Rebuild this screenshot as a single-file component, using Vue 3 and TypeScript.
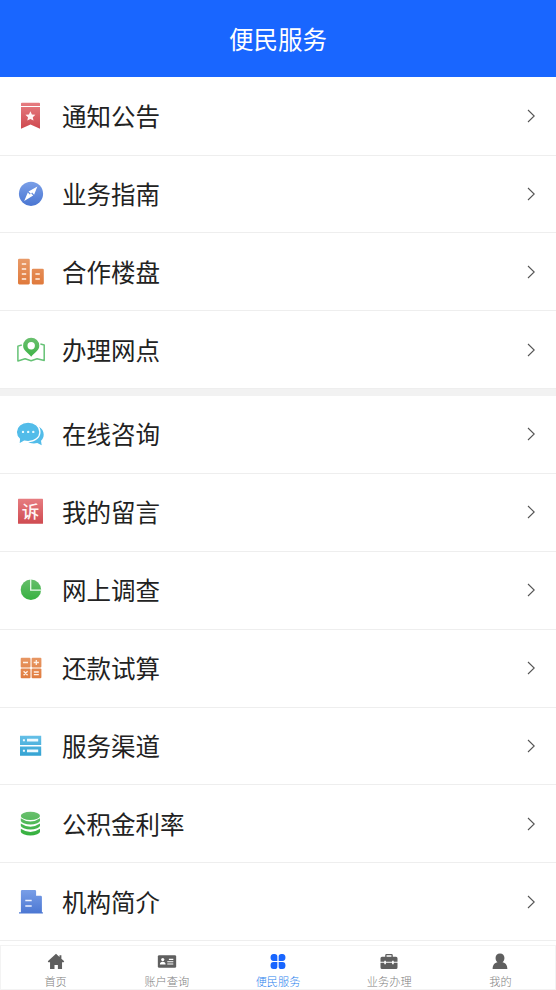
<script setup lang="ts">
interface Service {
  icon: string
  label: string
}

const groups: Service[][] = [
  [
    { icon: 'notice', label: '通知公告' },
    { icon: 'guide', label: '业务指南' },
    { icon: 'estate', label: '合作楼盘' },
    { icon: 'map', label: '办理网点' },
  ],
  [
    { icon: 'chat', label: '在线咨询' },
    { icon: 'message', label: '我的留言' },
    { icon: 'survey', label: '网上调查' },
    { icon: 'calc', label: '还款试算' },
    { icon: 'channel', label: '服务渠道' },
    { icon: 'rate', label: '公积金利率' },
    { icon: 'org', label: '机构简介' },
  ],
]

const tabs: Service[] = [
  { icon: 'home', label: '首页' },
  { icon: 'account', label: '账户查询' },
  { icon: 'service', label: '便民服务' },
  { icon: 'business', label: '业务办理' },
  { icon: 'mine', label: '我的' },
]

const activeTab = 'service'

const gradients = [
  { id: 'red', from: '#e67c80', to: '#cf4a50' },
  { id: 'blue', from: '#7ba0e8', to: '#4a76d2' },
  { id: 'orange', from: '#e89a68', to: '#e07a3c' },
  { id: 'green', from: '#6cc070', to: '#32b03c' },
  { id: 'sky', from: '#6cc4ea', to: '#2e9fd0' },
]
</script>

<template>
  <div class="page">
    <svg class="defs" width="0" height="0">
      <defs>
        <linearGradient v-for="g in gradients" :id="g.id" :key="g.id" x1="0" y1="2" x2="0" y2="27" gradientUnits="userSpaceOnUse">
          <stop offset="0" :stop-color="g.from" />
          <stop offset="1" :stop-color="g.to" />
        </linearGradient>
      </defs>
    </svg>

    <header class="header">便民服务</header>

    <main class="groups">
      <ul v-for="(group, i) in groups" :key="i" class="group">
        <li v-for="item in group" :key="item.label" class="row">
          <svg class="icon" viewBox="0 0 30 30">
            <template v-if="item.icon === 'notice'">
              <path fill="url(#red)" d="M5 2.6q0-.9.9-.9h17.2q.9 0 .9.9v2.4H5zM5 6h19v21.7l-9.5-4.2L5 27.7z" />
              <path fill="#fff5f5" d="M14.4 10.2l1.5 3.2 3.5.4-2.6 2.4.7 3.4-3.1-1.7-3.1 1.7.7-3.4-2.6-2.4 3.5-.4z" />
            </template>
            <template v-else-if="item.icon === 'guide'">
              <circle cx="15" cy="14.8" r="12.1" fill="url(#blue)" />
              <path fill="#fff" d="M21.4 7.5l-3.3 8.2-2-2.1-.9.9 2 2L8.2 22l3.6-8.5 2 2 .9-.9-2.2-2z" />
            </template>
            <template v-else-if="item.icon === 'estate'">
              <rect x="2" y="1.7" width="11.8" height="25.7" rx="1.3" fill="url(#orange)" />
              <rect x="15.8" y="11.7" width="12" height="15.7" rx="1.3" fill="url(#orange)" />
              <path stroke="#fff1e6" stroke-width="1.6" d="M5.8 7h4.4M5.8 12h4.4M5.8 17h4.4M5.8 22h4.4M19.4 17h4.4M19.4 22h4.4" />
            </template>
            <template v-else-if="item.icon === 'map'">
              <path fill="none" stroke="#65c275" stroke-width="1.5" stroke-linejoin="round" d="M5.8 10L1.9 11.1v14.9l7.2-2.2 6 2 6-2 7.1 1.6V9.9l-3.8-.8" />
              <path fill="url(#green)" fill-rule="evenodd" d="M15.2 2.7a8.1 8.1 0 0 1 8.1 8.1c0 4.6-5 7.3-8.1 10.9-3.1-3.6-8.1-6.3-8.1-10.9a8.1 8.1 0 0 1 8.1-8.1zm0 4.3a3.7 3.7 0 1 0 0 7.4 3.7 3.7 0 0 0 0-7.4z" />
            </template>
            <template v-else-if="item.icon === 'chat'">
              <path fill="#52bce9" d="M22.7 7.5c3.4 2 5 4.7 5 8 0 2.7-1 4.7-2.7 6.2l.7 4.5-4.4-2.2c-4.1 1-7.6.2-10.1-1.8 7.4.1 12.6-4.4 12.3-10.3q-.1-2.3-.8-4.4z" />
              <path fill="#52bce9" stroke="#fff" stroke-width="1.3" d="M12.1 3.1c6.8 0 11.8 4.3 11.8 9.8s-5 9.8-11.8 9.8q-2 0-3.9-.5L2.9 25.4l.5-5.5C1.5 18.2.3 15.7.3 12.9c0-5.5 5-9.8 11.8-9.8z" />
              <g fill="#e8faff">
                <circle cx="7" cy="12.9" r="1.2" />
                <circle cx="12.2" cy="12.9" r="1.2" />
                <circle cx="17.3" cy="12.9" r="1.2" />
              </g>
            </template>
            <template v-else-if="item.icon === 'message'">
              <rect x="2" y="1.8" width="25" height="25" rx=".6" fill="url(#red)" />
              <text x="14.6" y="20.7" text-anchor="middle" class="stamp">诉</text>
            </template>
            <template v-else-if="item.icon === 'survey'">
              <circle cx="14.9" cy="14.7" r="10.2" fill="url(#green)" />
              <path fill="none" stroke="#e9faeb" stroke-width="1.3" d="M14.7 4v11.2h11" />
            </template>
            <template v-else-if="item.icon === 'calc'">
              <g fill="url(#orange)">
                <rect x="4.7" y="4.7" width="9.8" height="9.7" rx="1" />
                <rect x="15.6" y="4.7" width="9.8" height="9.7" rx="1" />
                <rect x="4.7" y="15.5" width="9.8" height="9.7" rx="1" />
                <rect x="15.6" y="15.5" width="9.8" height="9.7" rx="1" />
              </g>
              <path stroke="#fff1e6" stroke-width="1.3" d="M7 9.5h5M17.7 9.5h5.2M20.3 6.9v5.2M7.6 18.2l4 4M11.6 18.2l-4 4M17.8 19h5M17.8 21.6h5" />
            </template>
            <template v-else-if="item.icon === 'channel'">
              <path fill="url(#sky)" d="M4 4.7h21.2v9.2H4zM4 15.4h21.2v9.4H4z" />
              <path fill="#eefaff" d="M11 7.8h11.2v2.8H11zM11 18.4h11.2v2.8H11zM6.9 8.2h2v2h-2zM6.9 18.8h2v2h-2z" />
            </template>
            <template v-else-if="item.icon === 'rate'">
              <ellipse cx="14.4" cy="6.9" rx="9.6" ry="4.2" fill="url(#green)" />
              <path fill="url(#green)" d="M4.8 9.2q9.6 6.6 19.2 0v2.5q0 1.4-2.8 2.5-6.8 2.4-13.6 0-2.8-1.1-2.8-2.5zM4.8 14.5q9.6 6.4 19.2 0v2.3q0 1.4-2.8 2.5-6.8 2.4-13.6 0-2.8-1.1-2.8-2.5zM4.8 19.7q9.6 6.4 19.2 0v3q0 1.4-2.8 2.5-6.8 2.4-13.6 0-2.8-1.1-2.8-2.5z" />
            </template>
            <template v-else>
              <path fill="url(#blue)" d="M4.9 4.3q0-1.3 1.3-1.3h12.6q1.3 0 1.3 1.3v4.4h4.6q1.2 0 1.2 1.2v15.3h1v1.2H3v-1.2h1.9z" />
              <path stroke="#edf2ff" stroke-width="1.5" d="M9.3 13.6h6.4M9.3 19.1h6.4" />
            </template>
          </svg>
          <span class="label">{{ item.label }}</span>
          <svg class="chevron" viewBox="0 0 9 14">
            <path d="M1 1l6.2 6L1 13" />
          </svg>
        </li>
      </ul>
    </main>

    <nav class="tabbar">
      <a v-for="tab in tabs" :key="tab.icon" class="tab" :class="{ active: tab.icon === activeTab }">
        <svg class="tab-icon" viewBox="0 0 20 18">
          <path v-if="tab.icon === 'home'" d="M10 .8l3.7 3.4V2.3h2v3.7L18.7 8.8l-.6.9h-1.7V17h-4.4v-4.4H8.4V17H3.7V9.7H1.9L1.3 8.8z" />
          <template v-else-if="tab.icon === 'account'">
            <rect x=".3" y="2.3" width="19.4" height="13.4" rx="1.5" />
            <g fill="#fff">
              <circle cx="5.5" cy="7" r="1.7" />
              <path d="M2.5 12.3c0-2.2 1-3 3-3s3 .8 3 3zM12 6.2h4.7v1.1H12zM10.3 8.7h6.4v1.1h-6.4zM10.3 11.1h6.4v1.1h-6.4z" />
            </g>
          </template>
          <template v-else-if="tab.icon === 'service'">
            <path d="M5.3 1h1.2q2.8 0 2.8 2.8v4.7H5.3q-3.2 0-3.2-3.7T5.3 1zM14.7 1h-1.2q-2.8 0-2.8 2.8v4.7h4q3.2 0 3.2-3.7T14.7 1zM5.3 17h1.2q2.8 0 2.8-2.8V9.5H5.3q-3.2 0-3.2 3.7t3.2 3.8zM14.7 17h-1.2q-2.8 0-2.8-2.8V9.5h4q3.2 0 3.2 3.7t-3.2 3.8z" />
          </template>
          <template v-else-if="tab.icon === 'business'">
            <path fill-rule="evenodd" d="M6 4V2.3Q6 1 7.3 1h5.4Q14 1 14 2.3V4h3.4q1.600 0 1.600 1.600v3.700h-4V8.200h-1.700v1.100H6.700V8.200H5v1.100H1V5.600Q1 4 2.600 4zm1.400 0h5.200V2.500H7.400zM1 10.400h4v1.500h1.700v-1.500h6.600v1.500H15v-1.500h4v5q0 1.600-1.600 1.600H2.600Q1 17 1 15.400z" />
          </template>
          <path v-else d="M10 .5c3 0 4.700 2 4.700 4.800 0 2-.8 3.600-2.100 4.600 3.100.8 5.200 2.500 5.200 7.100H2.200c0-4.600 2.100-6.300 5.200-7.100C6.100 8.900 5.300 7.300 5.300 5.300 5.300 2.500 7 .5 10 .5z" />
        </svg>
        <span>{{ tab.label }}</span>
      </a>
    </nav>
  </div>
</template>

<style>
body {
  background: #fff;
}
</style>

<style scoped>
.page {
  display: flex;
  flex-direction: column;
  height: 990px;
  overflow: hidden;
  font-family: "Noto Sans CJK SC", sans-serif;
  color: #222;
}

.defs {
  position: absolute;
}

.header {
  flex: none;
  height: 77px;
  line-height: 77px;
  text-align: center;
  font-size: 24.5px;
  color: #fff;
  background: #1966ff;
}

.groups {
  display: flex;
  flex-direction: column;
  gap: 7px;
  background: #f2f2f2;
}

.group {
  margin: 0;
  padding: 0;
  list-style: none;
  background: #fff;
}

.group:first-child {
  padding-top: 0.8px;
}

.row {
  display: flex;
  align-items: center;
  box-sizing: border-box;
  height: 77.9px;
  padding: 0 20px 0 16px;
  border-bottom: 1px solid #eee;
}

.group:first-child .row {
  height: 77.8px;
}

.icon {
  flex: none;
  width: 30px;
  height: 30px;
}

.stamp {
  font-size: 17.5px;
  font-weight: 500;
  fill: #fff5f5;
}

.label {
  flex: 1;
  margin-left: 16px;
  font-size: 24.5px;
  line-height: 36px;
}

.chevron {
  width: 9px;
  height: 14px;
  fill: none;
  stroke: #555;
  stroke-width: 1.1;
}

.tabbar {
  display: flex;
  height: 45px;
  margin-top: auto;
  box-shadow: inset 0 0 0 1px #f3f3f3;
}

.tab {
  flex: 1;
  display: flex;
  flex-direction: column;
  align-items: center;
  padding-top: 8px;
  font-size: 11.2px;
  line-height: 18px;
  font-weight: 300;
  color: #808080;
}

.tab-icon {
  width: 20px;
  height: 18px;
  margin-bottom: 2px;
  fill: #5f5f5f;
}

.tab.active {
  color: #2b82ee;
}

.active .tab-icon {
  fill: #1966ff;
}
</style>
